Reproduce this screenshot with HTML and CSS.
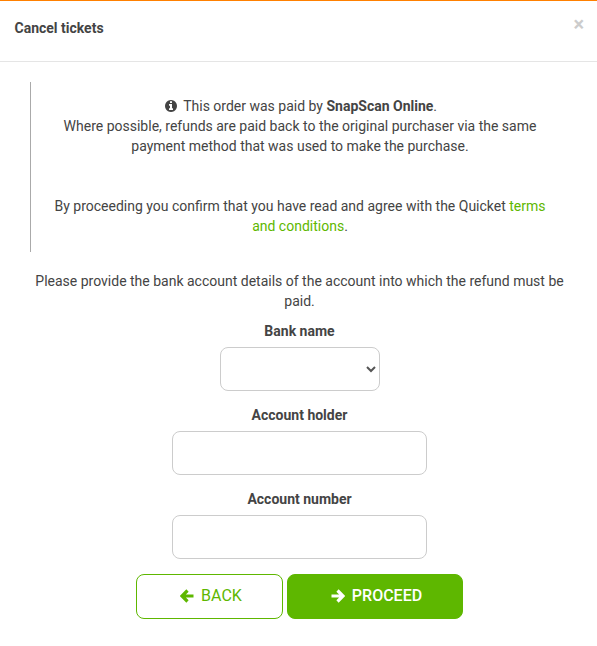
FILE: index.html
```html
<!DOCTYPE html>
<html lang="en">
<head>
    <meta charset="UTF-8">
    <meta name="viewport" content="width=device-width, initial-scale=1.0">
    <title>Cancel tickets</title>
    <link rel="stylesheet" href="styles.css">
</head>

<body>
    <div class="modal">
        <div class="modal-header">
            <h4 class="modal-title">Cancel tickets</h4>
            <button type="button" class="close" aria-label="Close">&times;</button>
        </div>

        <div class="modal-body">
            <div class="notice">
                <p>
                    <svg class="icon-info" viewBox="0 0 1536 1536"><path d="M1024 1248v-160q0-14-9-23t-23-9h-96V544q0-14-9-23t-23-9H544q-14 0-23 9t-9 23v160q0 14 9 23t23 9h96v320h-96q-14 0-23 9t-9 23v160q0 14 9 23t23 9h448q14 0 23-9t9-23zM896 352V192q0-14-9-23t-23-9H672q-14 0-23 9t-9 23v160q0 14 9 23t23 9h192q14 0 23-9t9-23zM1536 768q0 209-103 385.500T1153.500 1433 768 1536t-385.500-103T103 1153.500 0 768t103-385.500T382.500 103 768 0t385.500 103T1433 382.500 1536 768z"/></svg>
                    This order was paid by <strong>SnapScan Online</strong>.<br>
                    Where possible, refunds are paid back to the original purchaser via the same payment method that was used to make the purchase.
                </p>
                <p class="terms">By proceeding you confirm that you have read and agree with the Quicket <a href="#">terms and conditions</a>.</p>
            </div>

            <form class="bank-form">
                <p class="intro">Please provide the bank account details of the account into which the refund must be paid.</p>
                <label for="bankName">Bank name</label>
                <select id="bankName" class="form-control bank-select">
                    <option></option>
                </select>
                <label for="accountHolder">Account holder</label>
                <input id="accountHolder" class="form-control" type="text">
                <label for="accountNumber">Account number</label>
                <input id="accountNumber" class="form-control" type="text">

                <div class="buttons">
                    <button type="button" class="btn btn-back">
                        <svg class="icon-arrow" viewBox="0 0 14 14"><path d="M7.500 1.500L2 7l5.500 5.500M2.500 7H13.500"/></svg>
                        BACK
                    </button>
                    <button type="button" class="btn btn-proceed">
                        <svg class="icon-arrow" viewBox="0 0 14 14"><path d="M6.500 1.500L12 7l-5.500 5.500M11.500 7H0.500"/></svg>
                        PROCEED
                    </button>
                </div>
            </form>
        </div>
    </div>
</body>
</html>
```
FILE: styles.css
```css
* {
    box-sizing: border-box;
}

body {
    margin: 0;
    font-family: Roboto, sans-serif;
    font-size: 14px;
    line-height: 20px;
    color: #444;
    background-color: #fff;
}

.modal {
    border-top: 1px solid #ff8000;
}

.modal-header {
    display: flex;
    justify-content: space-between;
    height: 61px;
    padding: 17px 13px 0 14.500px;
    border-bottom: 1px solid #e5e5e5;
}

.modal-title {
    margin: 0;
    font-size: 14px;
    font-weight: bold;
}

.close {
    height: 20px;
    margin-top: -4px;
    padding: 0;
    border: 0;
    background: none;
    font-family: Roboto, sans-serif;
    font-size: 20px;
    font-weight: bold;
    line-height: 12px;
    color: #ccc;
}

.modal-body {
    padding: 20px 28px 20px 30px;
}

.notice {
    height: 170px;
    padding: 14px 20px 0;
    border-left: 1px solid #aaa;
    text-align: center;
}

.notice p {
    margin: 0;
}

.notice .terms {
    margin-top: 40px;
}

a {
    color: #5eb700;
    text-decoration: none;
}

.icon-info {
    width: 12px;
    height: 12px;
    margin: 0 3px 0 2px;
    fill: #444;
    vertical-align: -1px;
}

.bank-form {
    display: flex;
    flex-direction: column;
    align-items: center;
    padding-top: 19px;
}

.intro {
    margin: 0 0 10px;
    text-align: center;
}

label {
    margin-bottom: 6px;
    font-weight: bold;
}

.form-control {
    width: 255px;
    height: 44px;
    margin-bottom: 14px;
    border: 1px solid #ccc;
    border-radius: 8px;
    color: #555;
    background-color: #fff;
}

.bank-select {
    width: 160px;
    padding-right: 1px;
}

.buttons {
    display: flex;
    gap: 4px;
    margin-top: 1px;
}

.btn {
    display: flex;
    align-items: center;
    justify-content: center;
    gap: 7px;
    width: 147px;
    height: 45px;
    padding: 0 4px 2px 7px;
    border: 1px solid #5eb700;
    border-radius: 8px;
    font-family: Roboto, sans-serif;
    font-size: 16px;
}

.btn-back {
    color: #5eb700;
    background-color: #fff;
}

.btn-proceed {
    width: 176px;
    font-weight: 500;
    color: #fff;
    background-color: #5eb700;
}

.icon-arrow {
    width: 14px;
    height: 14px;
    fill: none;
    stroke: currentColor;
    stroke-width: 3.200;
}
```
